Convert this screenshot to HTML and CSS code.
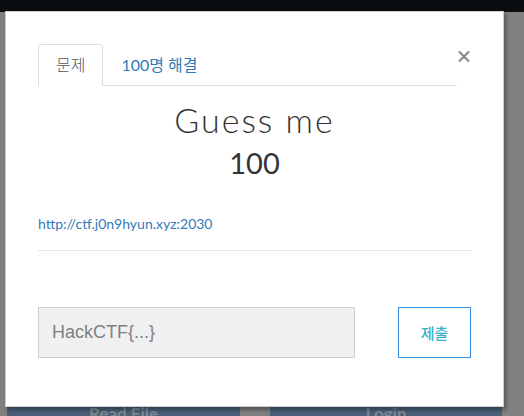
FILE: index.html
```html
<!DOCTYPE html>
<html lang="ko">
<head>
<meta charset="utf-8">
<title>Guess me</title>
<link rel="stylesheet" href="styles.css">
</head>
<body>
<div class="topbar"></div>
<div class="cards">
  <div class="card">Read File</div>
  <div class="card">Login</div>
</div>

<div class="modal">
  <div class="modal-body">
    <div class="header">
      <ul class="tabs">
        <li class="tab active">문제</li>
        <li class="tab">100명 해결</li>
      </ul>
      <button class="close" aria-label="닫기">
        <svg width="12" height="13" viewBox="0 0 12 13"><path d="M1 1.5 L11 11.5 M11 1.5 L1 11.5" stroke="#8c8c8c" stroke-width="2.2" fill="none"/></svg>
      </button>
    </div>
    <h1 class="title">Guess me</h1>
    <div class="points">100</div>
    <a class="link" href="#">http://ctf.j0n9hyun.xyz:2030</a>
    <hr class="rule">
    <form class="flag-form">
      <input class="flag-input" type="text" placeholder="HackCTF{...}">
      <button class="submit" type="button">제출</button>
    </form>
  </div>
</div>
</body>
</html>
```

FILE: styles.css
```css
html, body {
  margin: 0;
  padding: 0;
}
body {
  background: #808080;
  width: 524px;
  height: 416px;
  overflow: hidden;
  font-family: Lato, "Noto Sans CJK KR", sans-serif;
}
.topbar {
  height: 12px;
  background: #0b0e10;
}
.cards {
  display: grid;
  grid-template-columns: 233px 232px;
  column-gap: 30px;
  padding-left: 7px;
  margin-top: 383px;
}
.card {
  background: #4a6079;
  color: #7e8892;
  font-weight: 700;
  font-size: 17px;
  text-align: center;
  padding-top: 8px;
  height: 40px;
  box-sizing: border-box;
}
.modal {
  position: absolute;
  top: 11px;
  left: 5px;
  width: 497px;
  background: #fff;
  border: 1px solid rgba(0,0,0,0.2);
  box-shadow: 2px 3px 4px rgba(0,0,0,0.35);
}
.modal-body {
  padding: 32px 32px 48px 32px;
}
.header {
  display: flex;
  align-items: flex-start;
}
.tabs {
  flex: 1;
  display: flex;
  list-style: none;
  margin: 0;
  padding: 0;
  border-bottom: 1px solid #dddddd;
}
.tab {
  font-size: 16px;
  line-height: 20px;
  font-weight: 400;
  padding: 10px 15px 10px 15px;
  color: #337ab7;
  border: 1px solid transparent;
  border-radius: 4px 4px 0 0;
  margin-right: 2px;
  margin-bottom: -1px;
}
.tab.active {
  color: #555;
  background: #fff;
  border-color: #dddddd;
  border-bottom-color: #fff;
  font-weight: 300;
  padding: 10px 17px 10px 17px;
}
.close {
  border: 0;
  background: none;
  padding: 0;
  margin: 6px 1px 0 1px;
  width: 12px;
  height: 13px;
  display: flex;
}
.title {
  margin: 14px 0 0 0;
  font-size: 34px;
  line-height: 40px;
  font-weight: 300;
  letter-spacing: 2px;
  color: #333;
  text-align: center;
}
.points {
  margin-top: 5px;
  font-size: 29px;
  line-height: 36px;
  font-weight: 400;
  color: #333;
  text-align: center;
}
.link {
  display: block;
  margin-top: 33px;
  font-size: 14px;
  line-height: 20px;
  color: #337ab7;
  text-decoration: none;
}
.rule {
  margin: 16px 0 0 0;
  border: 0;
  border-top: 1px solid #e5e5e5;
  height: 0;
}
.flag-form {
  display: flex;
  justify-content: space-between;
  align-items: flex-start;
  margin: 56px 0 0 0;
}
.flag-input {
  width: 317px;
  height: 51px;
  box-sizing: border-box;
  background: #f0f0f0;
  border: 1px solid #ccd0d6;
  padding: 0 13px;
  font-family: "Liberation Sans", Arial, sans-serif;
  font-size: 18px;
  color: #555;
  outline: none;
}
.flag-input::placeholder {
  color: #7c8185;
}
.submit {
  width: 73px;
  height: 51px;
  box-sizing: border-box;
  background: #fff;
  border: 1px solid #3a90e0;
  color: #3ab0c9;
  font-family: "Noto Sans CJK KR", sans-serif;
  font-size: 15px;
  font-weight: 500;
  padding: 0;
}
```
